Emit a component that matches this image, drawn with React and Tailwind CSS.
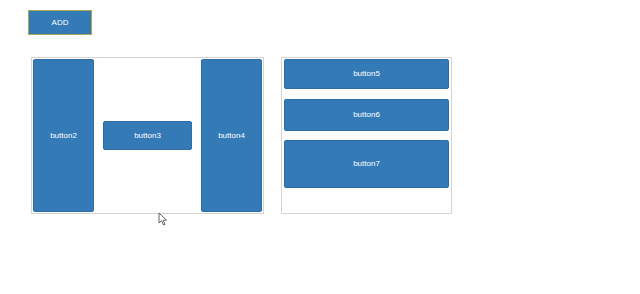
export default function App() {
  const btn =
    "bg-[#337ab7] border border-[#2e6da4] rounded-[2px] text-white text-[8px] flex items-center justify-center";

  return (
    <div
      className="relative w-[640px] h-[294px] bg-[#fefefe]"
      style={{ fontFamily: '"Liberation Sans", Arial, sans-serif' }}
    >
      <div className="pt-[10px] pl-[28px]">
        <button className="w-[64px] h-[25px] bg-[#337ab7] border border-[#a8a855] text-white text-[8px] flex items-center justify-center">
          ADD
        </button>
      </div>

      <div className="flex gap-[17px] pl-[31px] pt-[22px]">
        {/* left box */}
        <div className="w-[233px] h-[157px] border border-[#d4d4d4] p-px flex items-stretch justify-between">
          <div className={`${btn} w-[61px]`}>button2</div>
          <div className="flex items-center">
            <div className={`${btn} w-[89px] h-[29px]`}>button3</div>
          </div>
          <div className={`${btn} w-[61px]`}>button4</div>
        </div>

        {/* right box */}
        <div className="w-[171px] h-[157px] border border-[#d4d4d4] pt-px px-[2px] flex flex-col gap-[9.5px]">
          <div className={`${btn} h-[30px]`}>button5</div>
          <div className={`${btn} h-[32px]`}>button6</div>
          <div className={`${btn} h-[48px]`}>button7</div>
        </div>
      </div>

      {/* mouse cursor */}
      <svg
        className="absolute left-[158px] top-[212px]"
        width="10"
        height="14"
        viewBox="0 0 10 14"
      >
        <path
          d="M1 1 L1 11 L3.5 8.8 L5.5 13 L7 12.3 L5 8.2 L8.5 8.2 Z"
          fill="#fff"
          stroke="#555"
          strokeWidth="0.9"
          strokeLinejoin="round"
        />
      </svg>
    </div>
  );
}
